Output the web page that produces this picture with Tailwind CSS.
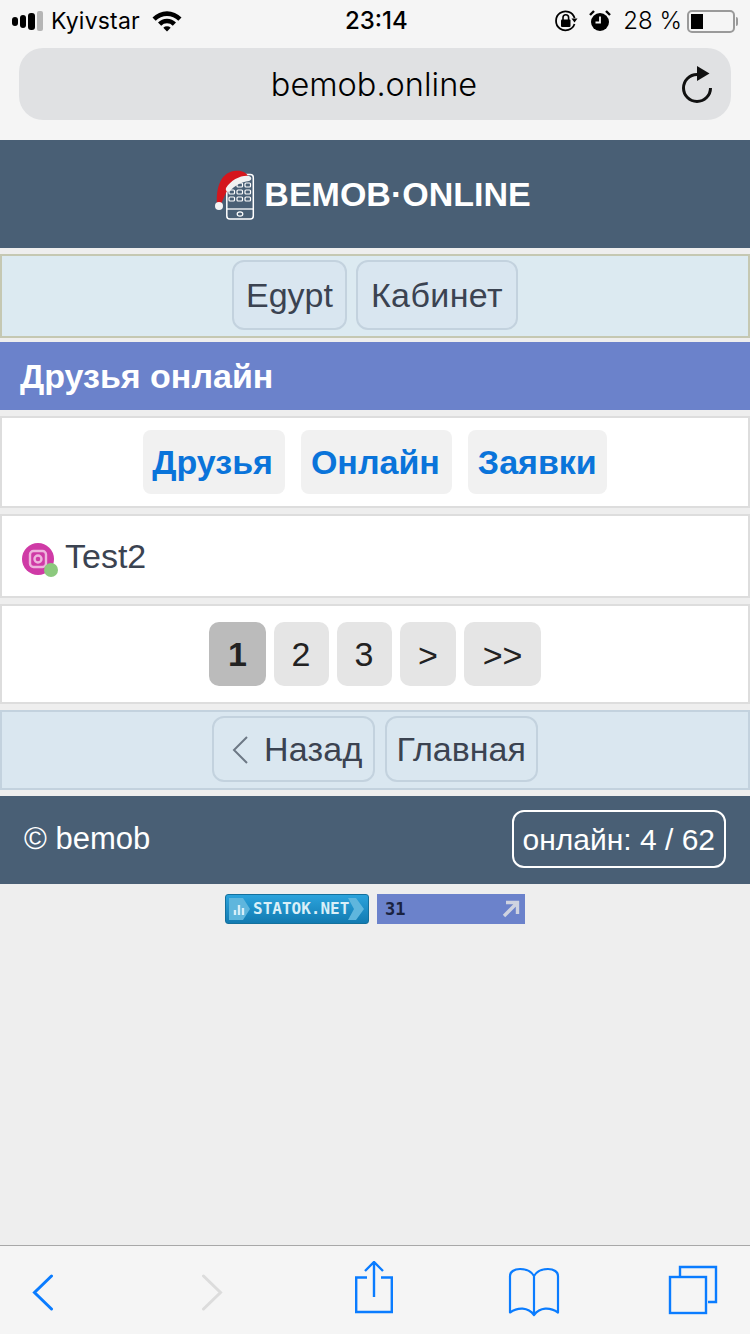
<!DOCTYPE html>
<html lang="ru">
<head>
    <meta charset="UTF-8">
    <meta name="viewport" content="width=device-width, initial-scale=1.0">
    <title>Друзья онлайн</title>
    <script src="https://cdn.jsdelivr.net/npm/@tailwindcss/browser@4"></script>
</head>
<body class="bg-[#eeeeee] font-['Liberation_Sans',Arial,sans-serif]">
<div class="w-[750px] h-[1334px] overflow-hidden flex flex-col">

    <!-- browser chrome -->
    <div class="h-[140px] bg-[#f5f5f5] shrink-0 flex flex-col text-black font-['Inter',sans-serif]">
        <div class="h-[42px] mb-[6px] px-[12px] flex items-center justify-between text-[24px] leading-none relative">
            <div class="flex items-center">
                <div class="flex items-center gap-[2px] h-[20px]">
                    <div class="w-[6px] h-[9px] rounded-[3px] bg-black"></div>
                    <div class="w-[6px] h-[13px] rounded-[3px] bg-black"></div>
                    <div class="w-[7px] h-[17px] rounded-[3px] bg-black"></div>
                    <div class="w-[6px] h-[20px] rounded-[2px] bg-[#b5b5b5]"></div>
                </div>
                <span class="ml-[8px] text-[23px] tracking-[0.2px]">Kyivstar</span>
                <svg class="ml-[12px]" width="30" height="22" viewBox="0 0 30 22">
                    <path d="M0.5 7.5 A20 20 0 0 1 29.5 7.5 L26.3 10.8 A15.5 15.5 0 0 0 3.7 10.8 Z" fill="#000"/>
                    <path d="M6 12.5 A12.5 12.5 0 0 1 24 12.5 L20.8 15.8 A8 8 0 0 0 9.2 15.8 Z" fill="#000"/>
                    <path d="M11.3 17.8 A5.4 5.4 0 0 1 18.7 17.8 L15 21.5 Z" fill="#000"/>
                </svg>
            </div>
            <span class="absolute left-[345px] top-[7px] text-[24px] leading-[28px] font-medium">23:14</span>
            <div class="flex items-center">
                <svg width="24" height="24" viewBox="0 0 24 24" fill="none">
                    <path d="M20.5 15 A9.5 9.5 0 1 1 20.6 9" stroke="#000" stroke-width="1.8"/>
                    <path d="M17.5 9.5 L23.5 9.5 L20.5 13.5 Z" fill="#000"/>
                    <rect x="7" y="10.5" width="9.5" height="7.5" rx="1" fill="#000"/>
                    <path d="M9 11 V8.5 A2.8 2.8 0 0 1 14.6 8.5 V11" stroke="#000" stroke-width="1.6"/>
                </svg>
                <svg class="ml-[11px]" width="22" height="24" viewBox="0 0 22 24">
                    <circle cx="11" cy="13" r="9" fill="#000"/>
                    <path d="M11 7.5 V13.5 H6.5" stroke="#f5f5f5" stroke-width="1.8" fill="none"/>
                    <path d="M1 6 L5 2 M21 6 L17 2" stroke="#000" stroke-width="2.4"/>
                </svg>
                <span class="ml-[12px] text-[24px] font-light">28 %</span>
                <div class="ml-[5px] w-[48px] h-[23px] border-2 border-[#9a9a9a] rounded-[5px] p-[2px]">
                    <div class="w-[12px] h-full bg-black"></div>
                </div>
                <div class="ml-[1px] w-[2px] h-[9px] bg-[#9a9a9a] rounded-r-[2px]"></div>
            </div>
        </div>
        <div class="mx-[19px] h-[72px] rounded-[24px] bg-[#e0e1e3] relative flex items-center justify-center">
            <span class="text-[32.5px] leading-none font-light mt-[2px] ml-[-2px]">bemob.online</span>
            <svg class="absolute right-[17px] top-[17px]" width="32" height="38" viewBox="0 0 32 38" fill="none">
                <path d="M15 9.5 A13.5 13.5 0 1 0 28.5 23" stroke="#111" stroke-width="3"/>
                <path d="M15 1 L27.5 8.5 L15 16 Z" fill="#111"/>
            </svg>
        </div>
    </div>

    <!-- site header -->
    <div class="h-[108px] shrink-0 bg-[#495f75] flex items-center justify-center">
        <svg width="44" height="52" viewBox="0 0 44 52" fill="none" class="mt-[2px] ml-[-5px]">
            <rect x="12.8" y="5.5" width="26.5" height="44.5" rx="3" stroke="#fff" stroke-width="1.5"/>
            <g stroke="#fff" stroke-width="1.2">
                <rect x="23" y="14" width="5.5" height="4" rx="1"/><rect x="31" y="14" width="5.5" height="4" rx="1"/>
                <rect x="15" y="21" width="5.5" height="4" rx="1"/><rect x="23" y="21" width="5.5" height="4" rx="1"/><rect x="31" y="21" width="5.5" height="4" rx="1"/>
                <rect x="15" y="28" width="5.5" height="4" rx="1"/><rect x="23" y="28" width="5.5" height="4" rx="1"/><rect x="31" y="28" width="5.5" height="4" rx="1"/>
            </g>
            <line x1="13" y1="40" x2="39" y2="40" stroke="#fff" stroke-width="1.3"/>
            <ellipse cx="26" cy="45" rx="2.8" ry="2.2" stroke="#fff" stroke-width="1.2"/>
            <path d="M3 35 C2 20 6 4 20 2 C27 1 33 3 35 9 L14 20 C11 25 9 31 7 35 Z" fill="#d4161d"/>
            <path d="M12 19 C17 11 27 6 35 7 C38 8 38 11 35 12 C27 13 20 17 16 22 C14 24 11 22 12 19 Z" fill="#f2f2f2"/>
            <circle cx="5" cy="37" r="4" fill="#f4f4f4"/>
        </svg>
        <span class="ml-[6px] text-[34px] leading-none font-bold text-white">BEMOB·ONLINE</span>
    </div>

    <!-- top nav -->
    <div class="mt-[6px] h-[84px] pb-[2px] shrink-0 bg-[#dceaf1] border-2 border-[#c5c8b2] flex items-center justify-center gap-[9px]">
        <a class="h-[70px] px-[12px] flex items-center rounded-[12px] border-2 border-[#c3d2de] bg-[#d9e6f0] text-[#3b4351] text-[34px]">Egypt</a>
        <a class="h-[70px] px-[13px] flex items-center rounded-[12px] border-2 border-[#c3d2de] bg-[#d9e6f0] text-[#3b4351] text-[34px] tracking-[0.4px]">Кабинет</a>
    </div>

    <!-- title -->
    <div class="mt-[4px] h-[68px] shrink-0 bg-[#6b82cb] px-[20px] flex items-center text-white text-[34px] font-bold">Друзья онлайн</div>

    <!-- tabs -->
    <div class="mt-[6px] h-[92px] shrink-0 bg-white border-2 border-[#dddddd] flex items-center justify-center gap-[16px]">
        <a class="h-[64px] pl-[9px] pr-[12px] flex items-center rounded-[8px] bg-[#f1f1f1] text-[#0a74da] text-[34px] font-bold">Друзья</a>
        <a class="h-[64px] pl-[10px] pr-[12px] flex items-center rounded-[8px] bg-[#f1f1f1] text-[#0a74da] text-[34px] font-bold">Онлайн</a>
        <a class="h-[64px] px-[10px] flex items-center rounded-[8px] bg-[#f1f1f1] text-[#0a74da] text-[34px] font-bold">Заявки</a>
    </div>

    <!-- friend row -->
    <div class="mt-[6px] h-[84px] shrink-0 bg-white border-2 border-[#dddddd] pl-[20px] flex items-center text-[#3b4351] text-[34px]">
        <div class="relative w-[32px] h-[32px] mt-[6px] shrink-0">
            <svg width="32" height="32" viewBox="0 0 32 32" fill="none">
                <circle cx="16" cy="16" r="16" fill="#cf3aa6"/>
                <rect x="8" y="8" width="16" height="16" rx="3.5" stroke="#eeb4dd" stroke-width="2.4"/>
                <circle cx="16" cy="16" r="3.5" stroke="#eeb4dd" stroke-width="2.4"/>
            </svg>
            <div class="absolute right-[-4px] bottom-[-2px] w-[14px] h-[14px] rounded-full bg-[#8cc97e]"></div>
        </div>
        <span class="ml-[11px]">Test2</span>
    </div>

    <!-- pager -->
    <div class="mt-[6px] h-[100px] shrink-0 bg-white border-2 border-[#dddddd] flex items-center justify-center gap-[8px] text-[#222222] text-[34px]">
        <a class="w-[57px] h-[64px] flex items-center justify-center rounded-[10px] bg-[#bbbbbb] font-bold">1</a>
        <a class="w-[55px] h-[64px] pr-[1px] flex items-center justify-center rounded-[10px] bg-[#e5e5e5]">2</a>
        <a class="w-[55px] h-[64px] pr-[1px] flex items-center justify-center rounded-[10px] bg-[#e5e5e5]">3</a>
        <a class="w-[56px] h-[64px] pt-[2px] flex items-center justify-center rounded-[10px] bg-[#e5e5e5]">&gt;</a>
        <a class="w-[77px] h-[64px] pt-[2px] flex items-center justify-center rounded-[10px] bg-[#e5e5e5]">&gt;&gt;</a>
    </div>

    <!-- bottom nav -->
    <div class="mt-[6px] h-[80px] pb-[2px] shrink-0 bg-[#dae7f0] border-2 border-[#c3d2de] flex items-center justify-center gap-[10px]">
        <a class="h-[66px] pl-[17px] pr-[10px] flex items-center rounded-[12px] border-2 border-[#c3d2de] text-[#3b4351] text-[34px] tracking-[0.2px]">
            <svg width="18" height="30" viewBox="0 0 18 30" fill="none" class="mr-[15px] mt-[2px]"><path d="M16 2 L3 15 L16 28" stroke="#6d7885" stroke-width="2"/></svg>
            Назад
        </a>
        <a class="h-[66px] px-[10px] flex items-center rounded-[12px] border-2 border-[#c3d2de] text-[#3b4351] text-[34px]">Главная</a>
    </div>

    <!-- footer -->
    <div class="mt-[6px] h-[88px] pb-[2px] shrink-0 bg-[#495f75] pl-[24px] pr-[24px] flex items-center justify-between text-white">
        <span class="text-[31px]">© bemob</span>
        <span class="h-[58px] px-[9px] flex items-center rounded-[12px] border-2 border-white text-[30px]">онлайн: 4 / 62</span>
    </div>

    <!-- counters -->
    <div class="mt-[10px] flex justify-center gap-[8px] shrink-0">
        <div class="relative w-[144px] h-[30px] rounded-[3px] bg-linear-to-b from-[#2ba3dc] to-[#127bb2] border border-[#13709d] flex items-center pl-[3px] overflow-hidden">
            <svg width="22" height="22" viewBox="0 0 22 22" class="shrink-0">
                <path d="M0 0 H14 L21 11 L14 22 H0 Z" fill="#5fb6dd"/>
                <path d="M6 17 V12 M10 17 V7 M14 17 V10" stroke="#d6eef8" stroke-width="2.4"/>
            </svg>
            <span class="ml-[2px] font-['DejaVu_Sans_Mono',monospace] text-[16px] leading-none font-bold text-[#d9eff8]">STATOK.NET</span>
            <svg class="absolute right-[2px] top-[3px]" width="18" height="22" viewBox="0 0 18 22"><path d="M0 0 H8 L16 11 L8 22 H0 L6 11 Z" fill="#5fb6dd"/></svg>
        </div>
        <div class="w-[148px] h-[30px] bg-[#6b82cb] flex items-center justify-between pl-[8px] pr-[5px]">
            <span class="font-['DejaVu_Sans_Mono',monospace] text-[17px] leading-none font-bold text-[#1a2340]">31</span>
            <svg width="18" height="18" viewBox="0 0 18 18" fill="none"><path d="M2 16 L15 3 M4 2.5 H15.5 V14" stroke="#cfd3e0" stroke-width="3.4"/></svg>
        </div>
    </div>

    <div class="flex-1"></div>

    <!-- safari toolbar -->
    <div class="h-[89px] shrink-0 bg-[#f5f5f5] border-t border-[#a8a8a8]">
        <div class="h-full pl-[32px] flex items-start">
            <svg width="22" height="37" viewBox="0 0 22 37" fill="none" class="mt-[28px]"><path d="M19.5 2 L2.5 18.5 L19.5 35" stroke="#0a7cff" stroke-width="3" stroke-linecap="round"/></svg>
            <svg width="22" height="37" viewBox="0 0 22 37" fill="none" class="mt-[28px] ml-[147px]"><path d="M2.5 2 L19.5 18.5 L2.5 35" stroke="#dcdcdc" stroke-width="3" stroke-linecap="round"/></svg>
            <svg width="38" height="54" viewBox="0 0 38 54" fill="none" class="mt-[15px] ml-[132px]">
                <path d="M12 16.5 H1.2 V51 H36.8 V16.5 H26" stroke="#0a7cff" stroke-width="2.4"/>
                <path d="M19 1 V36 M10 10 L19 1 L28 10" stroke="#0a7cff" stroke-width="2.4"/>
            </svg>
            <svg width="52" height="50" viewBox="0 0 52 50" fill="none" class="mt-[21px] ml-[115px]">
                <path d="M26 9 C23 4 18 2 12 2 C6 2 2 5 2 9 V45.5 C10 40 20 40 26 48 C32 40 42 40 50 45.5 V9 C50 5 46 2 40 2 C34 2 29 4 26 9 Z M26 9 V48" stroke="#0a7cff" stroke-width="2.2" stroke-linejoin="round"/>
            </svg>
            <svg width="50" height="50" viewBox="0 0 50 50" fill="none" class="mt-[19px] ml-[108px]">
                <path d="M12 12 V2 H48 V37 H40" stroke="#0a7cff" stroke-width="2.4"/>
                <rect x="2" y="12" width="36" height="36" stroke="#0a7cff" stroke-width="2.4"/>
            </svg>
        </div>
    </div>
</div>
</body>
</html>
